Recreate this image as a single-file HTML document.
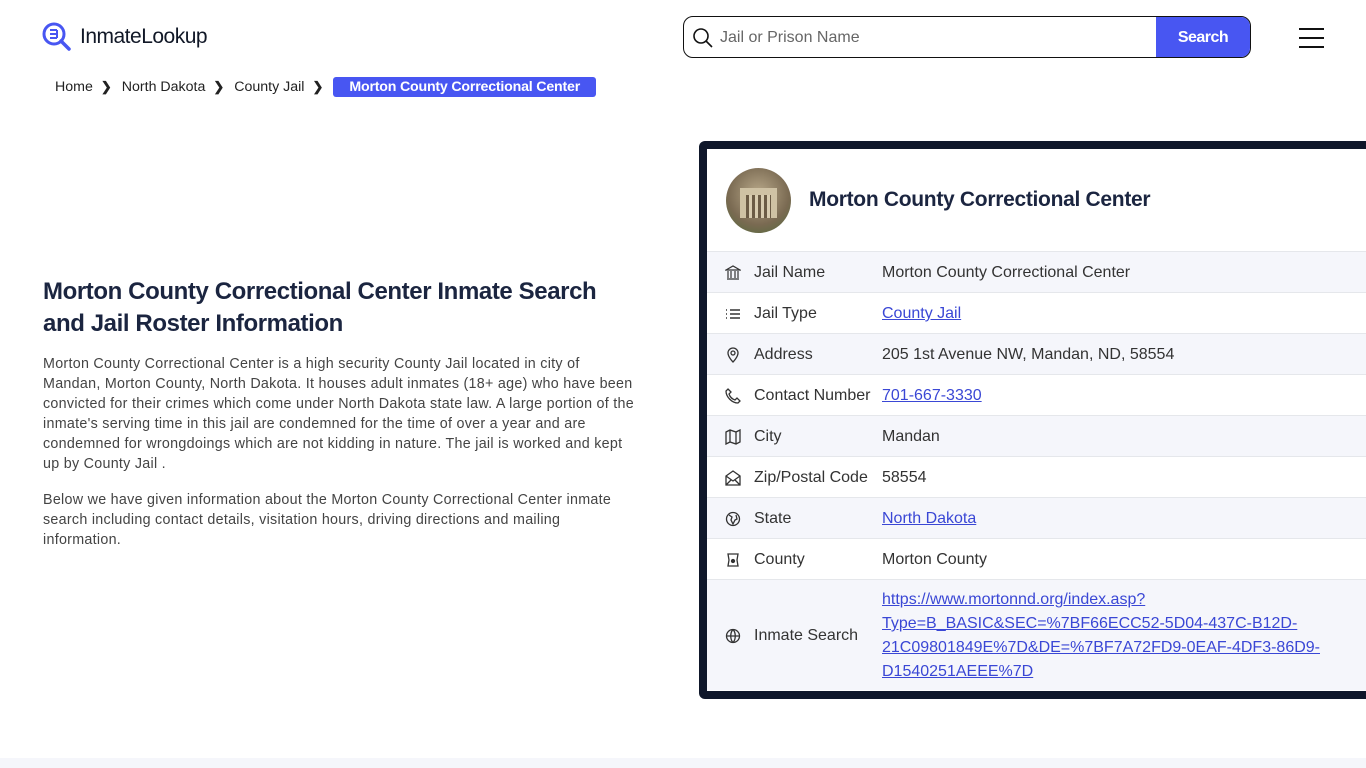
<!DOCTYPE html>
<html><head><meta charset="utf-8"><style>
*{margin:0;padding:0;box-sizing:border-box}
body{width:1366px;height:768px;overflow:hidden;background:#fff;font-family:"Liberation Sans",sans-serif;color:#1f2937;position:relative}
.logo{position:absolute;left:42px;top:22px;display:flex;align-items:center}
.logo span{font-size:21px;color:#111827;margin-left:8px;letter-spacing:-0.5px}
.search{position:absolute;left:683px;top:16px;width:568px;height:42px;border:1px solid #111;border-radius:10px;overflow:hidden;display:flex}
.search .ph{flex:1;display:flex;align-items:center;font-size:16px;color:#666;padding-left:8px;padding-top:2px}
.search .btn{width:94px;background:#4856f2;color:#fff;font-weight:bold;font-size:16px;display:flex;align-items:center;justify-content:center;letter-spacing:-0.5px;padding-top:2px}
.burger{position:absolute;left:1299px;top:28px;width:25px}
.burger i{display:block;height:2px;background:#111;margin-bottom:7px}
.bc{position:absolute;left:55px;top:77px;display:flex;align-items:center;font-size:14.2px;color:#222}
.bc .ch{margin:0 10px 0 8px;font-weight:bold;font-size:13px}
.bc .cur{background:#4856f2;color:#fff;padding:2px 16px;border-radius:3px;font-weight:bold;font-size:14.2px;letter-spacing:-0.2px}
h1{position:absolute;left:43px;top:276px;width:600px;font-size:24px;line-height:32px;color:#1b2540;font-weight:bold;letter-spacing:-0.4px}
.p{position:absolute;left:43px;width:595px;font-size:14.3px;letter-spacing:0.28px;line-height:20px;color:#444}
.card{position:absolute;left:699px;top:141px;width:700px;height:558px;background:#0f172a;border-radius:6px}
.inner{position:absolute;left:8px;top:8px;right:0;bottom:8px;background:#fff}
.head{height:102px;display:flex;align-items:center;padding-left:19px}
.av{width:65px;height:65px;border-radius:50%;background:radial-gradient(circle at 50% 40%,#b9a98a,#7a6a52 60%,#4f6b3a);overflow:hidden;position:relative}
.head h2{font-size:21px;margin-left:18px;color:#1b2540;letter-spacing:-0.3px}
.row{height:41px;border-top:1px solid #e5e7eb;display:flex;align-items:center;font-size:16px;color:#333;padding-top:2px}
.row:nth-child(even){background:#f5f6fb}
.row .ic{width:47px;padding-left:18px;display:flex}
.row .lb{width:128px}
.row a{color:#3a47d5;text-decoration:underline}
.row.big{height:111px}
.row.big .v{line-height:24px}
.foot{position:absolute;left:0;top:758px;width:1366px;height:10px;background:#f5f6fb}
svg{display:block}
</style></head><body>
<div class="logo"><svg width="30" height="30" viewBox="0 0 30 30"><circle cx="12" cy="12" r="10" fill="none" stroke="#4856f2" stroke-width="3"/><path d="M19 19l8 8" stroke="#4856f2" stroke-width="3.5" stroke-linecap="round"/><path d="M8 8h7M8 12h7M8 16h7M15 8v8" stroke="#4856f2" stroke-width="2"/></svg><span>InmateLookup</span></div>
<div class="search"><div class="ph"><svg width="22" height="22" viewBox="0 0 22 22" style="margin-right:6px"><circle cx="9" cy="9" r="7" fill="none" stroke="#111" stroke-width="1.6"/><path d="M14 14l6 6" stroke="#111" stroke-width="1.6"/></svg>Jail or Prison Name</div><div class="btn">Search</div></div>
<div class="burger"><i></i><i></i><i></i></div>
<div class="bc">Home<span class="ch">❯</span>North Dakota<span class="ch">❯</span>County Jail<span class="ch">❯</span><span class="cur">Morton County Correctional Center</span></div>
<h1>Morton County Correctional Center Inmate Search and Jail Roster Information</h1>
<div class="p" style="top:354px">Morton County Correctional Center is a high security County Jail located in city of Mandan, Morton County, North Dakota. It houses adult inmates (18+ age) who have been convicted for their crimes which come under North Dakota state law. A large portion of the inmate's serving time in this jail are condemned for the time of over a year and are condemned for wrongdoings which are not kidding in nature. The jail is worked and kept up by County Jail .</div>
<div class="p" style="top:490px">Below we have given information about the Morton County Correctional Center inmate search including contact details, visitation hours, driving directions and mailing information.</div>
<div class="card"><div class="inner">
<div class="head"><div class="av"><div style="position:absolute;left:14px;top:20px;width:37px;height:30px;background:#cfc2a4"></div><div style="position:absolute;left:20px;top:27px;width:25px;height:23px;background:repeating-linear-gradient(90deg,#6b5b45 0 3px,#d8ccb0 3px 6px)"></div></div><h2>Morton County Correctional Center</h2></div>
<div class="row"><div class="ic"><svg width="16" height="16" viewBox="0 0 16 16" fill="none" stroke="#333" stroke-width="1.2"><path d="M1 5L8 1l7 4zM2 14h12M3 6v7M6 6v7M10 6v7M13 6v7"/></svg></div><div class="lb">Jail Name</div><div>Morton County Correctional Center</div></div>
<div class="row"><div class="ic"><svg width="16" height="16" viewBox="0 0 16 16" stroke="#333" stroke-width="1.4"><path d="M5 4h10M5 8h10M5 12h10M1 4h1M1 8h1M1 12h1"/></svg></div><div class="lb">Jail Type</div><a>County Jail</a></div>
<div class="row"><div class="ic"><svg width="16" height="16" viewBox="0 0 16 16" fill="none" stroke="#333" stroke-width="1.3"><path d="M8 15s5-5 5-9a5 5 0 00-10 0c0 4 5 9 5 9z"/><circle cx="8" cy="6" r="2"/></svg></div><div class="lb">Address</div><div>205 1st Avenue NW, Mandan, ND, 58554</div></div>
<div class="row"><div class="ic"><svg width="16" height="16" viewBox="0 0 16 16" fill="none" stroke="#333" stroke-width="1.3"><path d="M3 1l3 3-2 2c1 3 3 5 6 6l2-2 3 3-2 2C7 15 1 9 1 3z"/></svg></div><div class="lb">Contact Number</div><a>701-667-3330</a></div>
<div class="row"><div class="ic"><svg width="16" height="16" viewBox="0 0 16 16" fill="none" stroke="#333" stroke-width="1.3"><path d="M1 3l4-2 6 2 4-2v12l-4 2-6-2-4 2zM5 1v12M11 3v12"/></svg></div><div class="lb">City</div><div>Mandan</div></div>
<div class="row"><div class="ic"><svg width="16" height="16" viewBox="0 0 16 16" fill="none" stroke="#333" stroke-width="1.3"><path d="M1 6l7-5 7 5v9H1zM1 6l7 5 7-5M1 15l5-5M15 15l-5-5"/></svg></div><div class="lb">Zip/Postal Code</div><div>58554</div></div>
<div class="row"><div class="ic"><svg width="16" height="16" viewBox="0 0 16 16" fill="none" stroke="#333" stroke-width="1.3"><circle cx="8" cy="8" r="6.5"/><path d="M4 4l3 2-1 3 2 4 2-4 2-1-1-4"/></svg></div><div class="lb">State</div><a>North Dakota</a></div>
<div class="row"><div class="ic"><svg width="16" height="16" viewBox="0 0 16 16" fill="none" stroke="#333" stroke-width="1.3"><path d="M3 2h10l-1 6 1 6H3l1-6z"/><circle cx="8" cy="9" r="1.5" fill="#333"/></svg></div><div class="lb">County</div><div>Morton County</div></div>
<div class="row big"><div class="ic"><svg width="16" height="16" viewBox="0 0 16 16" fill="none" stroke="#333" stroke-width="1.3"><circle cx="8" cy="8" r="6.5"/><path d="M1.5 8h13M8 1.5c-3 3-3 10 0 13M8 1.5c3 3 3 10 0 13"/></svg></div><div class="lb">Inmate Search</div><div class="v"><a>https://www.mortonnd.org/index.asp?<br>Type=B_BASIC&amp;SEC=%7BF66ECC52-5D04-437C-B12D-<br>21C09801849E%7D&amp;DE=%7BF7A72FD9-0EAF-4DF3-86D9-<br>D1540251AEEE%7D</a></div></div>
</div></div>
<div class="foot"></div>
</body></html>
